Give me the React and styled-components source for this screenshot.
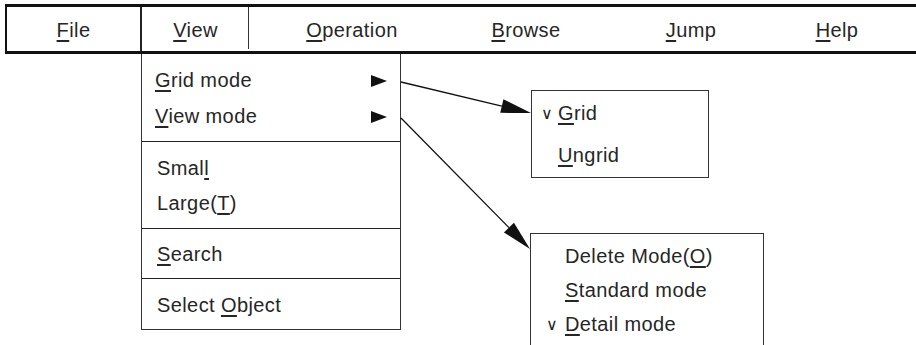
import React from 'react';
import styled, { createGlobalStyle } from 'styled-components';

const GlobalStyle = createGlobalStyle`
    html, body {
        margin: 0;
        padding: 0;
        background: #fff;
    }
    body {
        font-family: "Liberation Sans", Arial, sans-serif;
        color: #262626;
        width: 916px;
        height: 345px;
        overflow: hidden;
    }
`;

const Strona = styled.div`
    position: relative;
    width: 916px;
    height: 345px;
    padding-top: 4px;
    box-sizing: border-box;
    font-size: 20px;
    letter-spacing: 0.4px;
`;

const PasekMenu = styled.div`
    display: flex;
    margin-left: 5px;
    height: 50px;
    box-sizing: border-box;
    border: 2px solid #111;
    border-top-width: 3px;
    border-bottom-width: 3px;
    border-right: none;
`;

const PozycjaMenu = styled.div`
    position: relative;
    width: ${p => p.$szer}px;
    display: flex;
    align-items: center;
    justify-content: center;
    padding-top: 2px;
    flex: none;

    ${p => p.$kreska === 'gruba' && `
        border-right: 2px solid #222;
    `}
    ${p => p.$kreska === 'cienka' && `
        &::after {
            content: '';
            position: absolute;
            right: 0;
            top: 0;
            bottom: 2px;
            width: 1px;
            background: #333;
        }
    `}
`;

const Podkr = styled.span`
    text-decoration: underline;
    text-underline-offset: 3px;
    text-decoration-thickness: 1.5px;
`;

const Lista = styled.div`
    margin-left: 141px;
    width: 260px;
    box-sizing: border-box;
    border: 1px solid #333;
    border-top: none;
    display: flex;
    flex-direction: column;
`;

const Sekcja = styled.div`
    height: ${p => p.$wys}px;
    box-sizing: border-box;
    display: flex;
    flex-direction: column;
    justify-content: center;
    gap: ${p => p.$odstep || 0}px;
    padding-left: ${p => p.$wciecie || 15}px;
    padding-right: 13px;
    padding-top: 2px;
    border-bottom: ${p => (p.$ostatnia ? 'none' : '1.5px solid #222')};
`;

const Wiersz = styled.div`
    display: flex;
    align-items: center;
    justify-content: space-between;
    height: 22px;
`;

const Trojkat = styled.span`
    width: 0;
    height: 0;
    border-left: 16px solid #111;
    border-top: 6px solid transparent;
    border-bottom: 6px solid transparent;
`;

const PodMenu = styled.div`
    position: absolute;
    left: ${p => p.$x}px;
    top: ${p => p.$y}px;
    width: ${p => p.$szer}px;
    height: ${p => p.$wys}px;
    box-sizing: border-box;
    border: 1px solid #333;
    ${p => p.$otwarte && 'border-bottom: none;'}
    display: flex;
    flex-direction: column;
    justify-content: ${p => (p.$otwarte ? 'flex-start' : 'center')};
    padding-top: ${p => (p.$otwarte ? 11 : 1)}px;
    gap: ${p => p.$odstep}px;
`;

const PozycjaPod = styled.div`
    display: flex;
    align-items: center;
    height: 22px;
    padding-left: ${p => p.$wciecie}px;
`;

const Znacznik = styled.span`
    width: ${p => p.$szer}px;
    flex: none;
    font-size: 16px;
    letter-spacing: 0;
`;

const Strzalki = styled.svg`
    position: absolute;
    left: 0;
    top: 0;
    pointer-events: none;
`;

function Strzalka({ x1, y1, x2, y2 }) {
    const dx = x2 - x1;
    const dy = y2 - y1;
    const dl = Math.hypot(dx, dy);
    const ux = dx / dl;
    const uy = dy / dl;
    const dlGrotu = 30;
    const pol = 7;
    const bx = x2 - ux * dlGrotu;
    const by = y2 - uy * dlGrotu;
    const punkty = [
        [x2, y2],
        [bx - uy * pol, by + ux * pol],
        [bx + uy * pol, by - ux * pol],
    ].map(p => p.join(',')).join(' ');
    return (
        <g>
            <line x1={x1} y1={y1} x2={bx} y2={by} stroke="#111" strokeWidth="1.3" />
            <polygon points={punkty} fill="#111" />
        </g>
    );
}

const menu = [
    { t: 'File', p: 'F', r: 'ile', szer: 133, kreska: 'gruba' },
    { t: 'View', p: 'V', r: 'iew', szer: 107, kreska: 'cienka' },
    { t: 'Operation', p: 'O', r: 'peration', szer: 206 },
    { t: 'Browse', p: 'B', r: 'rowse', szer: 142 },
    { t: 'Jump', p: 'J', r: 'ump', szer: 188 },
    { t: 'Help', p: 'H', r: 'elp', szer: 104 },
];

function App() {
    return (
        <Strona>
            <GlobalStyle />
            <PasekMenu>
                {menu.map(m => (
                    <PozycjaMenu key={m.t} $szer={m.szer} $kreska={m.kreska}>
                        <span><Podkr>{m.p}</Podkr>{m.r}</span>
                    </PozycjaMenu>
                ))}
            </PasekMenu>

            <Lista>
                <Sekcja $wys={88} $odstep={14} $wciecie={13}>
                    <Wiersz><span><Podkr>G</Podkr>rid mode</span><Trojkat /></Wiersz>
                    <Wiersz><span><Podkr>V</Podkr>iew mode</span><Trojkat /></Wiersz>
                </Sekcja>
                <Sekcja $wys={87} $odstep={13}>
                    <Wiersz><span>Smal<Podkr>l</Podkr></span></Wiersz>
                    <Wiersz><span>Large(<Podkr>T</Podkr>)</span></Wiersz>
                </Sekcja>
                <Sekcja $wys={50}>
                    <Wiersz><span><Podkr>S</Podkr>earch</span></Wiersz>
                </Sekcja>
                <Sekcja $wys={50} $ostatnia>
                    <Wiersz><span>Select <Podkr>O</Podkr>bject</span></Wiersz>
                </Sekcja>
            </Lista>

            <PodMenu $x={531} $y={90} $szer={178} $wys={88} $odstep={20}>
                <PozycjaPod $wciecie={9}><Znacznik $szer={17}>∨</Znacznik><span><Podkr>G</Podkr>rid</span></PozycjaPod>
                <PozycjaPod $wciecie={9}><Znacznik $szer={17} /><span><Podkr>U</Podkr>ngrid</span></PozycjaPod>
            </PodMenu>

            <PodMenu $x={530} $y={233} $szer={234} $wys={115} $odstep={12} $otwarte>
                <PozycjaPod $wciecie={15}><Znacznik $szer={19} /><span>Delete Mode(<Podkr>O</Podkr>)</span></PozycjaPod>
                <PozycjaPod $wciecie={15}><Znacznik $szer={19} /><span><Podkr>S</Podkr>tandard mode</span></PozycjaPod>
                <PozycjaPod $wciecie={15}><Znacznik $szer={19}>∨</Znacznik><span><Podkr>D</Podkr>etail mode</span></PozycjaPod>
            </PodMenu>

            <Strzalki width="916" height="345">
                <Strzalka x1={401} y1={82} x2={531} y2={113} />
                <Strzalka x1={401} y1={118} x2={530} y2={249} />
            </Strzalki>
        </Strona>
    );
}

export default App;
